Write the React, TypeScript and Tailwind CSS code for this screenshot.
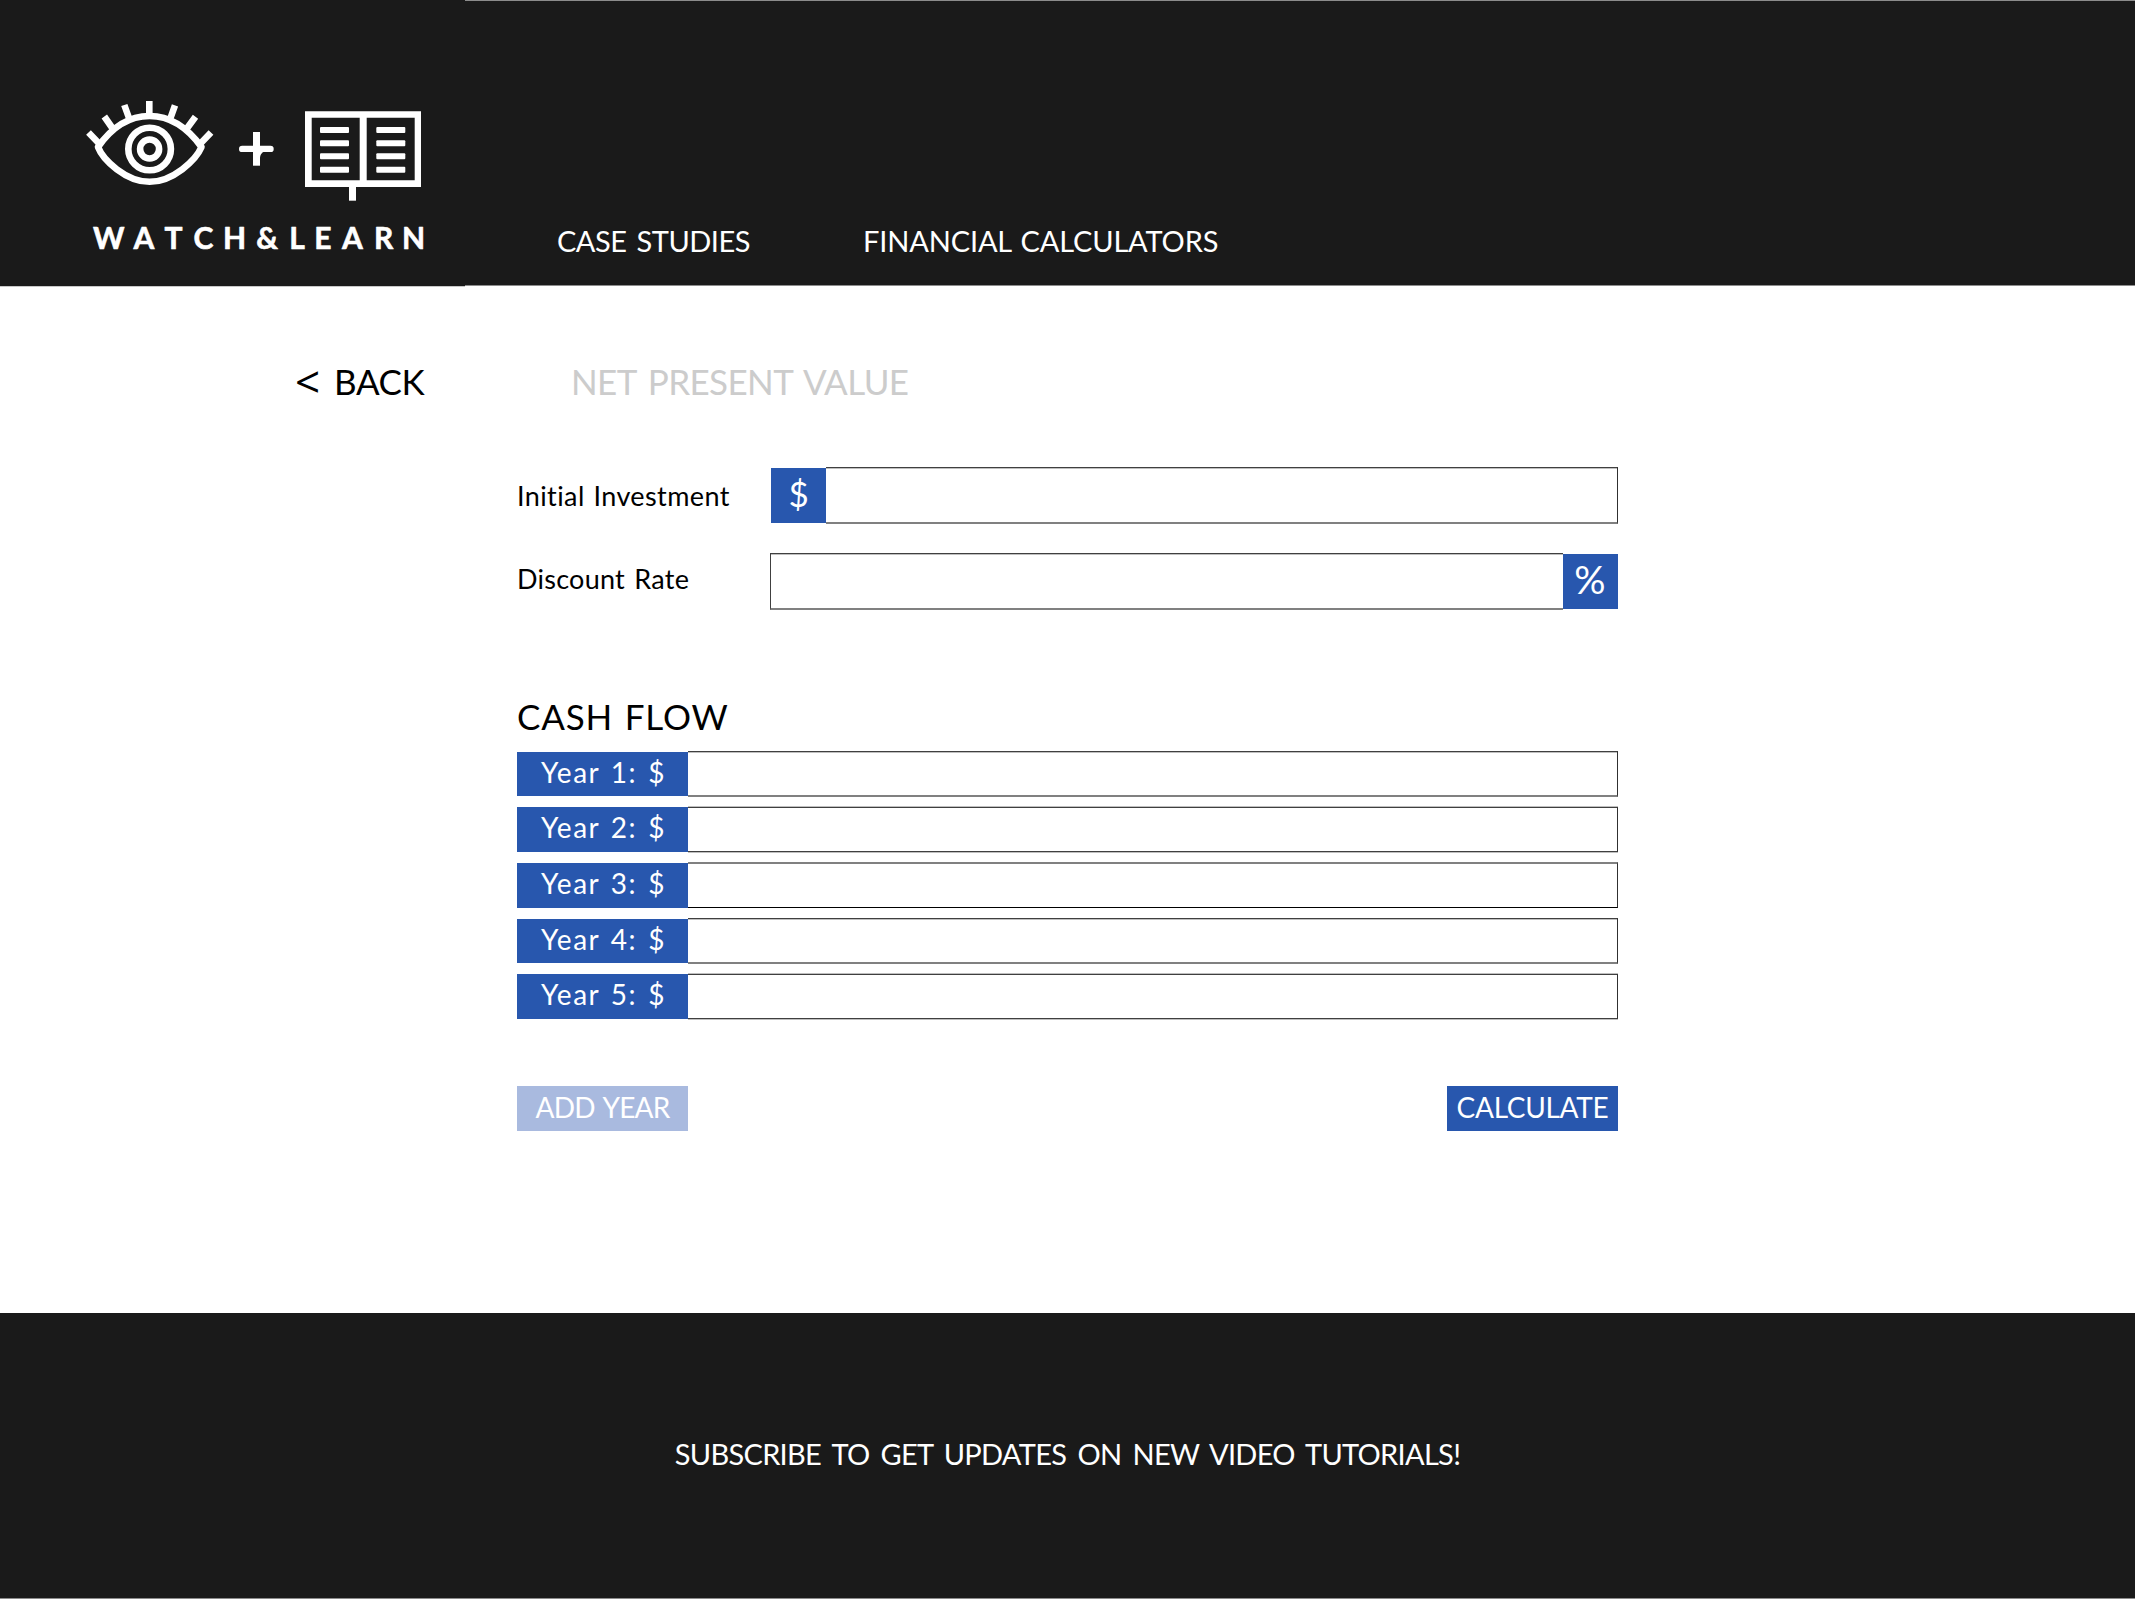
const LINE_Y = [127, 140.3, 153.3, 166.8];

const LETTERS: [string, number][] = [
  ["W", 108.7], ["A", 144], ["T", 173.5], ["C", 203.5], ["H", 234.5], ["&", 267],
  ["L", 297], ["E", 323], ["A", 352.5], ["R", 383.7], ["N", 413.6],
];

function Logo() {
  return (
    <svg className="block h-[286px] w-[465px]" viewBox="0 0 465 286" fill="none" stroke="#fff">
      <g strokeWidth="6.6">
        <path d="M98 147C112 127 130 116 149.6 116C169 116 187 127 201.5 147C196 160 173 181.8 149.6 181.8C126 181.8 103 160 98 147Z" strokeLinejoin="round" />
        <circle cx="149.6" cy="149" r="21.3" />
        <circle cx="149.6" cy="149" r="9.5" />
        <path d="M149.3 101V116M124.3 105L129 118M104.3 116.5L113 129M88.5 132.5L100 144.5M175 105.3L170.5 118M195.5 116.7L186.5 129M211 132.5L199.5 144.5" />
      </g>
      <path d="M256.5 132V165.7" strokeWidth="7" />
      <path d="M242.2 148.9H270.5" strokeWidth="6.4" strokeLinecap="round" />
      <path d="M259 151H266C262 152 260.5 154 260 158H259Z" fill="#fff" stroke="none" />
      <path d="M305 111.3H421V187H305ZM311.7 117.8V180.3H359.7V117.8ZM366.7 117.8V180.3H414.7V117.8Z" fill="#fff" fillRule="evenodd" stroke="none" />
      <path d="M349 186H356V200.7H349Z" fill="#fff" stroke="none" />
      {LINE_Y.map((y) => (
        <g key={y} fill="#fff" stroke="none">
          <rect x="320" y={y} width="29" height="6" rx="1" />
          <rect x="376.3" y={y} width="29" height="6" rx="1" />
        </g>
      ))}
      <g fill="#fff" stroke="#fff" strokeWidth="0.6" strokeLinejoin="round" fontFamily="Lato, sans-serif" fontWeight="700" fontSize="30" textAnchor="middle">
        {LETTERS.map(([c, x]) => (
          <text key={x} x={x} y="248.6">{c}</text>
        ))}
      </g>
    </svg>
  );
}

const CRISP_TOP = "border-t border-t-[#404040] shadow-[inset_0_1px_#bfbfbf]";
const SOFT_BOTTOM = "border-b-2 border-b-[#808080]";
const EVEN = "border-y border-y-[#404040] shadow-[0_-1px_#bfbfbf,0_1px_#bfbfbf]";
const RIGHT = "border-r border-r-[#303030]";

const YEARS = [
  { n: 1, row: "h-[46px]", cell: "mt-px h-[44px] pb-[4px]", input: `h-[46px] ${CRISP_TOP} ${SOFT_BOTTOM}` },
  { n: 2, row: "mt-[10px] h-[45px]", cell: "h-[45px] pb-[5px]", input: `h-[45px] ${EVEN}` },
  { n: 3, row: "mt-[10px] h-[46px]", cell: "mt-px h-[45px] pb-[5px]", input: "h-[46px] border-t-2 border-t-[#808080] border-b border-b-black" },
  { n: 4, row: "mt-[10px] h-[46px]", cell: "mt-px h-[44px] pb-[5px]", input: `h-[46px] ${CRISP_TOP} ${SOFT_BOTTOM}` },
  { n: 5, row: "mt-[10px] h-[45px]", cell: "h-[45px] pb-[5px]", input: `h-[45px] ${EVEN}` },
];

export default function App() {
  return (
    <div className="flex h-[1599px] w-[2135px] flex-col bg-white font-['Lato',sans-serif] text-black">
      <header className="flex h-[287px] items-start text-white">
        <div className="h-[287px] w-[465px] border-b border-[#c8c8c8] bg-[#1a1a1a]">
          <Logo />
        </div>
        <nav className="flex h-[286px] flex-1 border-y border-[#8c8c8c] bg-[#1a1a1a] pt-[220px] pl-[92px] text-[29px] leading-[40px] whitespace-nowrap">
          <a className="w-[306px] tracking-[-0.5px] [word-spacing:3.2px]">CASE STUDIES</a>
          <a className="tracking-[-0.15px] [word-spacing:2px]">FINANCIAL CALCULATORS</a>
        </nav>
      </header>

      <main className="h-[1026px]">
        <div className="flex h-[180px] pt-[69px] text-[35px] leading-[50px] whitespace-nowrap">
          <a className="ml-[295px] flex w-[276px]">
            <span className="w-[39px] font-['Open_Sans',sans-serif] text-[44px]">&lt;</span>
            <span className="tracking-[-0.4px]">BACK</span>
          </a>
          <h1 className="tracking-[-0.6px] text-[#cccccc] [word-spacing:3.6px]">NET PRESENT VALUE</h1>
        </div>

        <form className="ml-[517px] w-[1101px]">
          <div className="flex h-[57px]">
            <label className="w-[253.5px] text-[27px] leading-[58px] tracking-[0.4px] whitespace-nowrap [word-spacing:1.5px]">Initial Investment</label>
            <span className="mt-px flex h-[55px] w-[55.5px] items-center justify-center bg-[#2857ae] pb-[5px] pl-px text-[35px] text-white">$</span>
            <div className={`h-[57px] flex-1 ${CRISP_TOP} ${SOFT_BOTTOM} ${RIGHT}`} />
          </div>
          <div className="mt-[29px] flex h-[57px]">
            <label className="w-[253px] text-[27px] leading-[52px] tracking-[0.25px] whitespace-nowrap [word-spacing:2.2px]">Discount Rate</label>
            <div className={`h-[57px] flex-1 border-l border-l-[#404040] ${CRISP_TOP} ${SOFT_BOTTOM}`} />
            <span className="mt-px flex h-[55px] w-[55px] items-center justify-center bg-[#2857ae] pr-px pb-[4px] text-[39px] text-white">%</span>
          </div>

          <h2 className="mt-[81px] h-[60px] text-[35px] leading-[51px] tracking-[0.8px] whitespace-nowrap [word-spacing:2px]">CASH FLOW</h2>
          {YEARS.map((y) => (
            <div key={y.n} className={`flex ${y.row}`}>
              <span className={`flex w-[171px] items-center justify-center bg-[#2857ae] pl-[2px] text-[28px] tracking-[1.5px] whitespace-nowrap text-white [word-spacing:2.5px] ${y.cell}`}>
                Year {y.n}: $
              </span>
              <div className={`flex-1 ${RIGHT} ${y.input}`} />
            </div>
          ))}

          <div className="mt-[67px] flex justify-between text-[28px] whitespace-nowrap text-white">
            <button className="flex h-[45px] w-[171px] items-center justify-center bg-[#a9badf] pb-[4px] tracking-[-0.8px] [word-spacing:2.6px]">ADD YEAR</button>
            <button className="flex h-[45px] w-[171px] items-center justify-center bg-[#2857ae] pb-[4px] tracking-[-0.3px]">CALCULATE</button>
          </div>
        </form>
      </main>

      <footer className="flex h-[286px] items-center justify-center border-b border-[#8c8c8c] bg-[#1a1a1a] pb-[4px] text-[29px] tracking-[-0.7px] whitespace-nowrap text-white [word-spacing:4.4px]">
        SUBSCRIBE TO GET UPDATES ON NEW VIDEO TUTORIALS!
      </footer>
    </div>
  );
}
